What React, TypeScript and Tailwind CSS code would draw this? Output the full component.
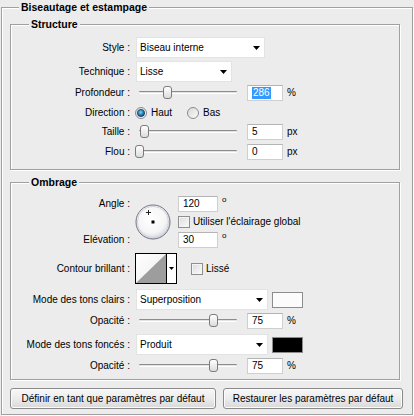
import type { ReactNode } from 'react';

// Boîte de dialogue "Biseautage et estampage" (style Windows 7)

function Group({ title, className, children }: { title: string; className?: string; children: ReactNode }) {
  return (
    <fieldset className={`w-[390px] border border-[#a0a0a0] shadow-[inset_1px_1px_0_#fff,1px_1px_0_#fff] ${className ?? ''}`}>
      <legend className="ml-[18px] bg-[#ececec] px-[2px] text-[10.5px] font-bold">{title}</legend>
      {children}
    </fieldset>
  );
}

function Row({ label, className, children }: { label: string; className?: string; children: ReactNode }) {
  return (
    <div className={`flex items-center ${className ?? ''}`}>
      <span className="w-[119px] shrink-0 text-right">{label}</span>
      {children}
    </div>
  );
}

function Arrow() {
  return (
    <svg width="7" height="4" viewBox="0 0 7 4">
      <path d="M0 0h7L3.5 4z" fill="#000" />
    </svg>
  );
}

function Select({ value, className }: { value: string; className?: string }) {
  return (
    <div className={`ml-[6px] flex h-[21px] items-center justify-between border border-[#e3e3e3] bg-white pl-[3px] pr-[4px] ${className ?? ''}`}>
      <span>{value}</span>
      <Arrow />
    </div>
  );
}

function Field({ value, selected, className }: { value: string; selected?: boolean; className?: string }) {
  return (
    <div className={`flex h-[16px] items-center border border-[#cfcfcf] border-t-[#b4b4b4] bg-white pl-[4px] ${className ?? 'ml-[10px] w-[36px]'}`}>
      {selected ? <span className="bg-[#3399ff] px-[1px] leading-[12px] text-white">{value}</span> : <span>{value}</span>}
    </div>
  );
}

function Slider({ thumb }: { thumb: string }) {
  return (
    <div className="relative ml-[5px] h-[16px] w-[102px] shrink-0">
      <div className="absolute left-[4px] right-0 top-[6px] h-[3px] rounded-[1px] border-t border-t-[#8d8d8d] border-b border-b-white bg-[#e2e2e2]" />
      <div className={`absolute top-[1px] h-[13px] w-[9px] rounded-[3px] border border-[#7b7b7b] bg-linear-to-b from-white to-[#dcdcdc] ${thumb}`} />
    </div>
  );
}

function Radio({ checked }: { checked?: boolean }) {
  return (
    <svg width="12" height="12" viewBox="0 0 12 12" className="shrink-0">
      <defs>
        <linearGradient id="rOff" x1="0" y1="0" x2="1" y2="1">
          <stop offset="0" stopColor="#d8d8d8" />
          <stop offset="1" stopColor="#fbfbfb" />
        </linearGradient>
        <radialGradient id="rOn" cx="45%" cy="40%" r="60%">
          <stop offset="0" stopColor="#7fd0f5" />
          <stop offset="0.6" stopColor="#2a7fb8" />
          <stop offset="1" stopColor="#0d3f66" />
        </radialGradient>
      </defs>
      <circle cx="6" cy="6" r="5.5" fill="url(#rOff)" stroke="#8b8b8b" />
      {checked && <circle cx="6" cy="6" r="3.6" fill="url(#rOn)" stroke="#1c3d5c" strokeWidth="0.8" />}
    </svg>
  );
}

function Check({ className }: { className?: string }) {
  return (
    <div className={`h-[12px] w-[12px] shrink-0 border border-[#8e8f8f] bg-linear-to-br from-[#dcdcdc] to-[#fbfbfb] shadow-[inset_0_0_0_1px_#f4f4f4] ${className ?? ''}`} />
  );
}

function Unit({ children }: { children: ReactNode }) {
  return <span className="ml-[4px]">{children}</span>;
}

function Degree() {
  return <span className="ml-[4px] self-start text-[8px] leading-[8px]">o</span>;
}

function Dial() {
  return (
    <svg width="36" height="36" viewBox="0 0 36 36" className="ml-[5px] mt-[8px] shrink-0">
      <defs>
        <radialGradient id="dial" cx="45%" cy="40%" r="60%">
          <stop offset="0" stopColor="#ffffff" />
          <stop offset="0.7" stopColor="#f5f5f7" />
          <stop offset="1" stopColor="#d3d4dc" />
        </radialGradient>
      </defs>
      <circle cx="18" cy="18" r="17" fill="url(#dial)" stroke="#6f7380" />
      <circle cx="18" cy="18" r="15.6" fill="none" stroke="#d4d5dc" />
      <path d="M13.5 6v5M11 8.5h5" stroke="#222" strokeWidth="1" />
      <rect x="16.5" y="16.5" width="3" height="3" fill="#000" />
    </svg>
  );
}

function Contour() {
  return (
    <div className="ml-[5px] flex h-[31px] w-[42px] shrink-0 border border-black bg-white">
      <svg width="30" height="29" viewBox="0 0 30 29">
        <defs>
          <linearGradient id="ct" x1="0" y1="0" x2="1" y2="1">
            <stop offset="0" stopColor="#ffffff" />
            <stop offset="1" stopColor="#ececec" />
          </linearGradient>
        </defs>
        <rect width="30" height="29" fill="url(#ct)" />
        <path d="M0 29L30 0V29Z" fill="#9d9d9d" />
      </svg>
      <div className="flex w-[10px] items-center justify-center border-l border-black">
        <svg width="5" height="3" viewBox="0 0 5 3">
          <path d="M0 0h5L2.5 3z" fill="#000" />
        </svg>
      </div>
    </div>
  );
}

function Button({ children, className }: { children: ReactNode; className?: string }) {
  return (
    <button className={`h-[21px] shrink-0 rounded-[3px] border border-[#8a8a8a] bg-linear-to-b from-[#f8f8f8] via-[#ececec] to-[#d8d8d8] text-center shadow-[inset_0_0_0_1px_#fbfbfb] ${className ?? ''}`}>
      {children}
    </button>
  );
}

export default function App() {
  return (
    <div className="h-[416px] w-[414px] overflow-hidden bg-[#ececec] font-['Liberation_Sans',Arial,sans-serif] text-[10px] leading-[14px] text-black">
      <fieldset className="ml-[1px] h-[415px] w-[409px] border border-[#a0a0a0] pl-[8px] pr-[9px] pt-[3px] shadow-[inset_1px_1px_0_#fff,1px_1px_0_#fff]">
        <legend className="ml-[9px] bg-[#ececec] px-[2px] text-[10.5px] font-bold">Biseautage et estampage</legend>

        <Group title="Structure" className="pb-[9px]">
          <Row label="Style :" className="mt-[6px] h-[21px]">
            <Select value="Biseau interne" className="w-[129px]" />
          </Row>
          <Row label="Technique :" className="mt-[3px] h-[21px]">
            <Select value="Lisse" className="w-[96px]" />
          </Row>
          <Row label="Profondeur :" className="mt-[3px] h-[16px]">
            <Slider thumb="left-[28px]" />
            <Field value="286" selected />
            <Unit>%</Unit>
          </Row>
          <Row label="Direction :" className="mt-[4px] h-[16px]">
            <span className="ml-[5px] flex items-center">
              <Radio checked />
              <span className="ml-[4px] w-[36px]">Haut</span>
              <Radio />
              <span className="ml-[4px]">Bas</span>
            </span>
          </Row>
          <Row label="Taille :" className="mt-[3px] h-[16px]">
            <Slider thumb="left-[5px]" />
            <Field value="5" />
            <Unit>px</Unit>
          </Row>
          <Row label="Flou :" className="mt-[4px] h-[16px]">
            <Slider thumb="left-0" />
            <Field value="0" />
            <Unit>px</Unit>
          </Row>
        </Group>

        <Group title="Ombrage" className="mt-[5px] pb-[5px]">
          <div className="mt-[7px] flex h-[52px]">
            <div className="flex w-[119px] shrink-0 flex-col justify-between text-right">
              <span className="h-[16px] leading-[16px]">Angle :</span>
              <span className="h-[16px] leading-[16px]">Elévation :</span>
            </div>
            <Dial />
            <div className="ml-[7px] flex flex-col">
              <div className="flex">
                <Field value="120" className="w-[40px]" />
                <Degree />
              </div>
              <div className="mt-[3px] flex h-[13px] items-center">
                <Check />
                <span className="ml-[3px]">Utiliser l'éclairage global</span>
              </div>
              <div className="mt-[4px] flex">
                <Field value="30" className="w-[40px]" />
                <Degree />
              </div>
            </div>
          </div>
          <Row label="Contour brillant :" className="mt-[5px] h-[31px]">
            <Contour />
            <Check className="ml-[14px]" />
            <span className="ml-[3px]">Lissé</span>
          </Row>
          <Row label="Mode des tons clairs :" className="mt-[5px] h-[21px]">
            <Select value="Superposition" className="w-[132px]" />
            <div className="ml-[4px] h-[16px] w-[31px] border border-[#8c8c8c] bg-[#fbfbfb]" />
          </Row>
          <Row label="Opacité :" className="mt-[3px] h-[16px]">
            <Slider thumb="left-[74px]" />
            <Field value="75" />
            <Unit>%</Unit>
          </Row>
          <Row label="Mode des tons foncés :" className="mt-[5px] h-[21px]">
            <Select value="Produit" className="w-[132px]" />
            <div className="ml-[4px] h-[16px] w-[31px] border border-[#8c8c8c] bg-black" />
          </Row>
          <Row label="Opacité :" className="mt-[3px] h-[16px]">
            <Slider thumb="left-[74px]" />
            <Field value="75" />
            <Unit>%</Unit>
          </Row>
        </Group>

        <div className="mt-[8px] flex gap-[7px]">
          <Button className="w-[206px]">Définir en tant que paramètres par défaut</Button>
          <Button className="w-[180px]">Restaurer les paramètres par défaut</Button>
        </div>
      </fieldset>
    </div>
  );
}
